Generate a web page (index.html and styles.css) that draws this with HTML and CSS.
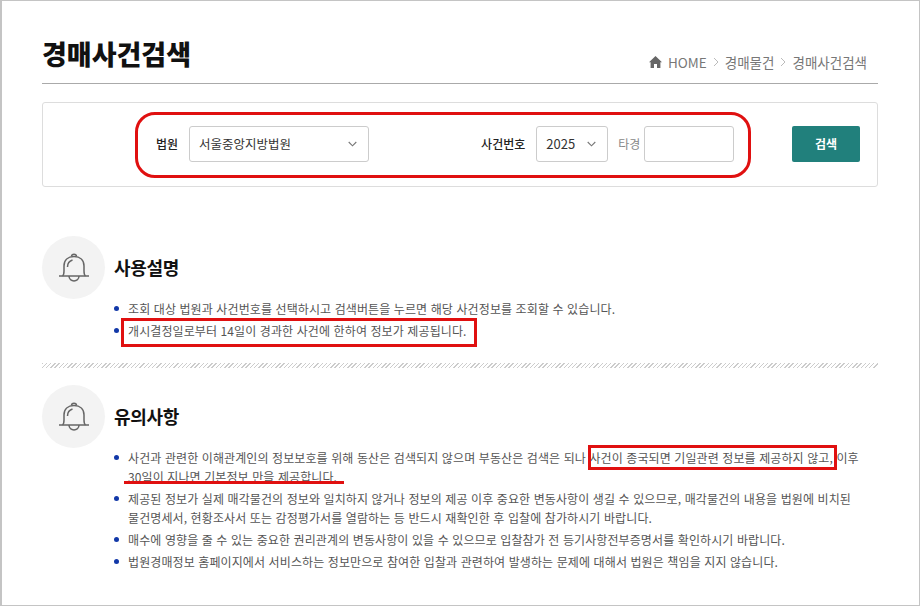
FILE: index.html
```html
<!DOCTYPE html>
<html lang="ko">
<head>
    <meta charset="UTF-8">
    <meta name="viewport" content="width=device-width, initial-scale=1.0">
    <title>경매사건검색</title>
    <link rel="stylesheet" href="styles.css">
</head>
<body>
    <div class="page">
        <header class="page-head">
            <h1>경매사건검색</h1>
            <nav class="crumbs">
                <svg class="home-icon" width="13" height="12" viewBox="0 0 13 12"><path d="M6.5 0 13 6.2 11.4 6.2V12H8V8H5V12H1.6V6.2H0Z" fill="#666"/></svg>
                <span class="crumb-home">HOME</span>
                <svg class="crumb-sep" width="6" height="10" viewBox="0 0 6 10"><path d="M1 1 5 5 1 9" fill="none" stroke="#bbb"/></svg>
                <span>경매물건</span>
                <svg class="crumb-sep" width="6" height="10" viewBox="0 0 6 10"><path d="M1 1 5 5 1 9" fill="none" stroke="#bbb"/></svg>
                <span>경매사건검색</span>
            </nav>
        </header>

        <form class="search-box">
            <label class="field-label court-label">법원</label>
            <div class="select court-select">
                <span>서울중앙지방법원</span>
                <svg width="9" height="6" viewBox="0 0 9 6"><path d="M.7 1 4.500 4.800 8.300 1" fill="none" stroke="#777" stroke-width="1.1"/></svg>
            </div>
            <label class="field-label case-label">사건번호</label>
            <div class="select year-select">
                <span>2025</span>
                <svg width="9" height="6" viewBox="0 0 9 6"><path d="M.7 1 4.500 4.800 8.300 1" fill="none" stroke="#777" stroke-width="1.1"/></svg>
            </div>
            <span class="case-type">타경</span>
            <div class="case-input"></div>
            <div class="search-btn">검색</div>
            <div class="mark-oval"></div>
        </form>

        <section class="info first">
            <div class="info-head">
                <div class="bell">
                    <svg width="30" height="30" viewBox="0 0 30 30"><g fill="none" stroke="#666" stroke-width="1.5"><path d="M0 23H30"/><path d="M3.500 23C5 22 5 20 5 18V13C5 7 9 3.500 15 3.500S25 7 25 13V18C25 20 25 22 26.500 23"/><path d="M12.500 3.500C12.500 .5 17.500 .5 17.500 3.500"/><path d="M10 23C10 29.500 20 29.500 20 23"/><path d="M8.500 14C8.500 10 10.500 8 13.500 7"/></g></svg>
                </div>
                <h2>사용설명</h2>
            </div>
            <ul class="info-list">
                <li>조회 대상 법원과 사건번호를 선택하시고 검색버튼을 누르면 해당 사건정보를 조회할 수 있습니다.</li>
                <li>개시결정일로부터 14일이 경과한 사건에 한하여 정보가 제공됩니다.</li>
            </ul>
        </section>

        <div class="hatch"></div>

        <section class="info">
            <div class="info-head">
                <div class="bell">
                    <svg width="30" height="30" viewBox="0 0 30 30"><g fill="none" stroke="#666" stroke-width="1.5"><path d="M0 23H30"/><path d="M3.500 23C5 22 5 20 5 18V13C5 7 9 3.500 15 3.500S25 7 25 13V18C25 20 25 22 26.500 23"/><path d="M12.500 3.500C12.500 .5 17.500 .5 17.500 3.500"/><path d="M10 23C10 29.500 20 29.500 20 23"/><path d="M8.500 14C8.500 10 10.500 8 13.500 7"/></g></svg>
                </div>
                <h2>유의사항</h2>
            </div>
            <ul class="info-list">
                <li>사건과 관련한 이해관계인의 정보보호를 위해 동산은 검색되지 않으며 부동산은 검색은 되나 사건이 종국되면 기일관련 정보를 제공하지 않고, 이후 30일이 지나면 기본정보 만을 제공합니다.</li>
                <li>제공된 정보가 실제 매각물건의 정보와 일치하지 않거나 정보의 제공 이후 중요한 변동사항이 생길 수 있으므로, 매각물건의 내용을 법원에 비치된 물건명세서, 현황조사서 또는 감정평가서를 열람하는 등 반드시 재확인한 후 입찰에 참가하시기 바랍니다.</li>
                <li>매수에 영향을 줄 수 있는 중요한 권리관계의 변동사항이 있을 수 있으므로 입찰참가 전 등기사항전부증명서를 확인하시기 바랍니다.</li>
                <li>법원경매정보 홈페이지에서 서비스하는 정보만으로 참여한 입찰과 관련하여 발생하는 문제에 대해서 법원은 책임을 지지 않습니다.</li>
            </ul>
        </section>

        <div class="mark-box mark-one"></div>
        <div class="mark-box mark-two"></div>
        <div class="mark-line"></div>
    </div>
</body>
</html>
```

FILE: styles.css
```css
* {
    box-sizing: border-box;
}

body {
    margin: 0;
    font-family: "Noto Sans CJK KR", "Noto Sans", sans-serif;
    color: #333;
    background: #fff;
}

.page {
    position: relative;
    width: 920px;
    height: 606px;
    padding: 0 41px 0 40px;
    border: 1px solid #c4c4c4;
    border-left-width: 2px;
    overflow: hidden;
}

.page-head {
    display: flex;
    justify-content: space-between;
    align-items: flex-end;
    height: 83px;
    border-bottom: 1px solid #aaa;
}

h1 {
    margin: 0 0 9px;
    font-size: 27px;
    line-height: 40px;
    font-weight: 900;
    letter-spacing: 0;
    color: #111;
}

.crumbs {
    display: flex;
    align-items: center;
    gap: 6px;
    margin: 0 11px 11px 0;
    font-size: 13.500px;
    line-height: 20px;
    color: #777;
}

.search-box {
    position: relative;
    display: flex;
    align-items: center;
    height: 85px;
    margin-top: 18px;
    padding: 0 17px 2px 113px;
    border: 1px solid #ddd;
    border-radius: 3px;
}

.field-label {
    font-size: 12px;
    font-weight: 500;
    color: #222;
}

.court-label {
    margin-right: 11px;
}

.select {
    display: flex;
    justify-content: space-between;
    align-items: center;
    height: 36px;
    padding: 0 11px 0 9px;
    border: 1px solid #ccc;
    border-radius: 3px;
    font-size: 12.500px;
    color: #333;
}

.court-select {
    width: 180px;
    margin-right: 112px;
}

.case-label {
    margin-right: 11px;
}

.year-select {
    width: 72px;
    font-size: 13px;
}

.case-type {
    margin: 0 4px 0 10px;
    font-size: 12px;
    color: #888;
}

.case-input {
    width: 90px;
    height: 36px;
    border: 1px solid #ccc;
    border-radius: 3px;
}

.search-btn {
    display: flex;
    justify-content: center;
    align-items: center;
    width: 68px;
    height: 36px;
    margin-left: auto;
    border-radius: 2px;
    background: #21807c;
    color: #fff;
    font-size: 12px;
    font-weight: 700;
}

.info.first {
    margin-top: 49px;
}

.info-head {
    display: flex;
    align-items: center;
    gap: 9px;
    margin-bottom: -3px;
}

.bell {
    display: flex;
    justify-content: center;
    align-items: center;
    width: 63px;
    height: 63px;
    border-radius: 50%;
    background: #f3f3f3;
}

h2 {
    margin: 0 0 2px;
    font-size: 18px;
    font-weight: 700;
    letter-spacing: -0.3px;
    color: #111;
}

.info-list {
    margin: 0;
    padding: 0 16px 0 86px;
    list-style: none;
}

.info-list li {
    position: relative;
    margin-top: 3px;
    font-size: 12px;
    line-height: 19px;
    letter-spacing: 0.1px;
    color: #555;
}

.info-list li::before {
    content: "";
    position: absolute;
    left: -14px;
    top: 7px;
    width: 5px;
    height: 5px;
    border-radius: 50%;
    background: #1238a8;
}

.hatch {
    height: 5px;
    margin: 23px 0 17px;
    background: repeating-linear-gradient(135deg, #ccc 0, #ccc 1px, #fff 1px, #fff 3px);
}

.mark-oval {
    position: absolute;
    left: 92px;
    top: 9px;
    width: 616px;
    height: 66px;
    border: 3px solid #e01010;
    border-radius: 20px;
}

.mark-box {
    position: absolute;
    border: 3px solid #e01010;
}

.mark-one {
    left: 119px;
    top: 317px;
    width: 356px;
    height: 29px;
}

.mark-two {
    left: 586px;
    top: 444px;
    width: 249px;
    height: 25px;
}

.mark-line {
    position: absolute;
    left: 122px;
    top: 480px;
    width: 220px;
    height: 3px;
    background: #e01010;
}
```
